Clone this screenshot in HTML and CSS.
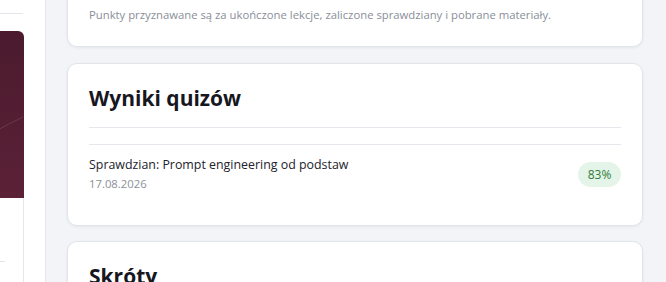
FILE: index.html
```html
<!DOCTYPE html>
<html lang="pl">
<head>
  <meta charset="UTF-8">
  <title>Panel ucznia</title>
  <link rel="stylesheet" href="styles.css">
</head>
<body>
  <div class="layout">
    <aside class="side">
      <div class="side-sep"></div>
      <div class="side-card">
        <div class="side-hero">
          <svg class="hero-arc" width="23" height="167" viewBox="0 0 23 167">
            <path d="M-4 100 Q 10 92 23 86" fill="none" stroke="rgba(255,255,255,0.12)" stroke-width="1"/>
          </svg>
        </div>
        <div class="side-body">
          <div class="side-line"></div>
        </div>
      </div>
    </aside>

    <main class="main">
      <section class="card">
        <p class="note">Punkty przyznawane są za ukończone lekcje, zaliczone sprawdziany i pobrane materiały.</p>
      </section>

      <section class="card">
        <h2 class="card-title">Wyniki quizów</h2>
        <ul class="results">
          <li class="result">
            <div>
              <div class="result-name">Sprawdzian: Prompt engineering od podstaw</div>
              <div class="result-date">17.08.2026</div>
            </div>
            <span class="badge">83%</span>
          </li>
        </ul>
      </section>

      <section class="card">
        <h2>Skróty</h2>
      </section>
    </main>
  </div>
</body>
</html>
```

FILE: styles.css
```css
body {
  margin: 0;
  font-family: "Open Sans", Arial, sans-serif;
  background: #f3f4f8;
  color: #1c1c28;
  overflow: hidden;
}
.layout {
  display: flex;
  height: 282px;
}
.side {
  width: 45px;
  flex-shrink: 0;
  background: white;
  border-right: 1px solid #e4e6ed;
}
.side-sep {
  width: 23px;
  height: 1px;
  background: #e6e7ec;
  margin-top: 13px;
}
.side-card {
  width: 23px;
  margin-top: 17px;
  height: 400px;
  border-right: 1px solid #e6e7ec;
  border-top-right-radius: 6px;
}
.side-hero {
  height: 167px;
  background: linear-gradient(180deg, #4b1a2d 0%, #5b2137 100%);
  border-top-right-radius: 6px;
  margin-right: -1px;
}
.hero-arc {
  display: block;
}
.side-body {
  padding-top: 63px;
}
.side-line {
  width: 5px;
  height: 1px;
  background: #e3e4e9;
}
.main {
  width: 576px;
  margin-left: 21px;
  margin-top: -15px;
  display: flex;
  flex-direction: column;
  gap: 15px;
}
.card {
  background: white;
  border: 1px solid #e2e4eb;
  border-radius: 10px;
  box-shadow: 0 1px 3px rgba(20, 24, 40, 0.06);
  padding: 20px 21px 22px;
}
.card + .card {
  margin-top: 1px;
}
.card + .card + .card {
  margin-top: 0;
}
h2 {
  margin: 0;
  font-size: 21px;
  line-height: 28px;
  font-weight: 700;
  color: #17171f;
}
.note {
  margin: 0;
  font-size: 11.3px;
  line-height: 18px;
  color: #8a8e99;
}
.card-title {
  padding-bottom: 15px;
  border-bottom: 1px solid #e6e7ec;
}
.results {
  list-style: none;
  margin: 16px 0 0;
  padding: 0;
}
.result {
  display: flex;
  align-items: center;
  justify-content: space-between;
  border-top: 1px solid #e6e7ec;
  padding: 11px 0 10px;
}
.result-name {
  font-size: 12.4px;
  line-height: 18px;
  color: #22222c;
}
.result-date {
  font-size: 11.3px;
  line-height: 18px;
  color: #8b8f99;
  margin-top: 1px;
}
.badge {
  display: inline-flex;
  align-items: center;
  justify-content: center;
  width: 43px;
  height: 25px;
  border-radius: 13px;
  background: #e5f4e8;
  color: #2e7d3a;
  font-size: 12px;
}
```
